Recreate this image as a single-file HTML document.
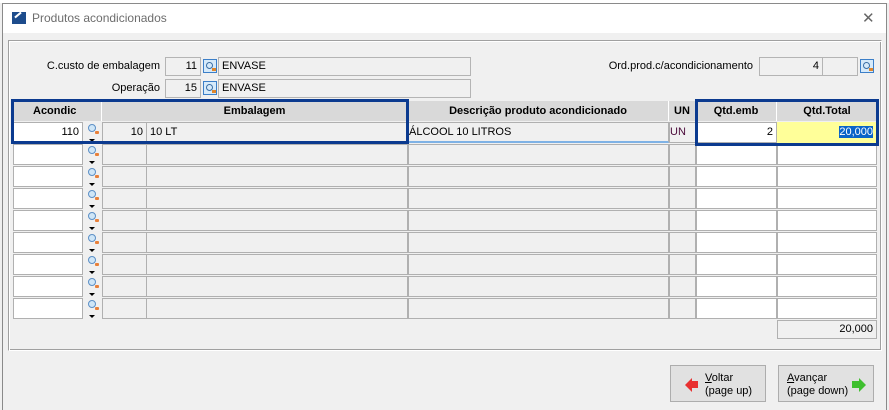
<!DOCTYPE html>
<html><head><meta charset="utf-8"><style>
*{margin:0;padding:0;box-sizing:border-box}
body{width:889px;height:410px;background:#f0f0f0;font-family:"Liberation Sans",sans-serif;font-size:11px;color:#000;position:relative;overflow:hidden}
.a{position:absolute}
.c{position:absolute;border:1px solid #b0b0b0;height:21px;line-height:19px;padding:0 3px;white-space:nowrap;overflow:hidden}
.w{background:#fff}.g{background:#f0f0f0}
.r{text-align:right}
.hd{position:absolute;top:101px;height:20px;background:#d9d9d9;font-weight:bold;text-align:center;line-height:20px;border-right:1px solid #fff}
.ic{position:absolute;width:8px;height:8px;border:1.5px solid #5b8fc6;border-radius:50%;background:#cfe6f7}
.ic:after{content:"";position:absolute;left:6px;top:6px;width:4px;height:3px;background:#e8803a;border-radius:1px}
.dn{position:absolute;width:0;height:0;border-left:3px solid transparent;border-right:3px solid transparent;border-top:3px solid #000}
.lk{position:absolute;width:14px;height:14px;border:1px solid #3c7fc8;background:#d6eafa}
.lk i{position:absolute;left:2px;top:2px;width:7px;height:7px;border:1.5px solid #3a6ea5;border-radius:50%}
.lk b{position:absolute;left:8px;top:8px;width:4px;height:3px;background:#e0862b}
.fld{position:absolute;border:1px solid #b4b4b4;background:#f0f0f0;height:19px;line-height:17px;padding:0 3px}
.box{position:absolute;border:3px solid #0b3a8f}
.btn{position:absolute;top:365px;height:37px;width:96px;border:1px solid #adadad;background:#e1e1e1;font-size:11px;line-height:13px}
</style></head><body>
<div class="a" style="left:0;top:0;width:889px;height:3px;background:#fff"></div>
<div class="a" style="left:2px;top:3px;width:885px;height:407px;border:1px solid #8a8a8a;border-bottom:none;background:#f0f0f0"></div>
<div class="a" style="left:3px;top:4px;width:883px;height:29px;background:#fff"></div>
<div class="a" style="left:12px;top:12px;width:14px;height:12px;background:#1d4c8c"></div>
<div class="a" style="left:14px;top:14px;width:8px;height:2px;background:#fff;transform:rotate(-40deg)"></div>
<div class="a" style="left:32px;top:11px;font-size:12px;color:#6d6d6d">Produtos acondicionados</div>
<div class="a" style="left:862px;top:9px;font-size:15px;color:#666">✕</div>
<div class="a" style="left:8px;top:40px;width:874px;height:311px;border:1px solid #a0a0a0;border-right-color:#fff;border-bottom-color:#fff;box-shadow:inset 1px 1px 0 #fff, inset -1px -1px 0 #a0a0a0"></div>

<div class="a" style="left:20px;top:60px;width:140px;text-align:right;font-size:11px">C.custo de embalagem</div>
<div class="fld r" style="left:165px;top:57px;width:36px">11</div>
<div class="lk" style="left:203px;top:59px"><i></i><b></b></div>
<div class="fld" style="left:218px;top:57px;width:253px">ENVASE</div>
<div class="a" style="left:20px;top:82px;width:140px;text-align:right">Operação</div>
<div class="fld r" style="left:165px;top:79px;width:36px">15</div>
<div class="lk" style="left:203px;top:81px"><i></i><b></b></div>
<div class="fld" style="left:218px;top:79px;width:253px">ENVASE</div>
<div class="a" style="left:560px;top:60px;width:193px;text-align:right">Ord.prod.c/acondicionamento</div>
<div class="fld r" style="left:759px;top:57px;width:64px">4</div>
<div class="fld" style="left:822px;top:57px;width:36px"></div>
<div class="lk" style="left:860px;top:59px"><i></i><b></b></div>

<div class="hd" style="left:13px;width:89px;text-align:left;padding-left:20px">Acondic</div>
<div class="hd" style="left:102px;width:306px">Embalagem</div>
<div class="hd" style="left:408px;width:261px">Descrição produto acondicionado</div>
<div class="hd" style="left:669px;width:27px">UN</div>
<div class="hd" style="left:696px;width:81px">Qtd.emb</div>
<div class="hd" style="left:777px;width:101px">Qtd.Total</div>

<div class="c w r" style="left:13px;top:122px;width:70px">110</div>
<div class="c g r" style="left:102px;top:122px;width:45px">10</div>
<div class="c g" style="left:146px;top:122px;width:262px">10 LT</div>
<div class="c g" style="left:408px;top:122px;width:261px;padding:0;border-bottom:2px solid #7fb2e5">ÁLCOOL 10 LITROS</div>
<div class="c g" style="left:669px;top:122px;width:27px;padding:0;color:#4a0a3a">UN</div>
<div class="c w r" style="left:696px;top:122px;width:81px">2</div>
<div class="c r" style="left:777px;top:122px;width:100px;background:#ffff99;border-color:#ffff99"><span style="background:#0a64c8;color:#fff">20,000</span></div>
<div class="ic" style="left:88px;top:124px"></div><div class="dn" style="left:89px;top:139px"></div>

<div id="rows"></div>
<div class="c g r" style="left:777px;top:320px;width:100px;height:19px;line-height:17px">20,000</div>

<div class="box" style="left:11px;top:99px;width:398px;height:45px"></div>
<div class="box" style="left:695px;top:99px;width:184px;height:47px"></div>

<div class="btn" style="left:670px">
<div class="a" style="left:14px;top:12px;width:0;height:0;border-top:7px solid transparent;border-bottom:7px solid transparent;border-right:7px solid #e83030"></div>
<div class="a" style="left:20px;top:15px;width:7px;height:7px;background:#e83030"></div>
<div class="a" style="left:34px;top:6px"><u>V</u>oltar<br>(page up)</div></div>
<div class="btn" style="left:778px">
<div class="a" style="left:8px;top:6px"><u>A</u>vançar<br>(page down)</div>
<div class="a" style="left:73px;top:15px;width:7px;height:7px;background:#3fbf2f"></div>
<div class="a" style="left:80px;top:12px;width:0;height:0;border-top:7px solid transparent;border-bottom:7px solid transparent;border-left:7px solid #3fbf2f"></div></div>

<script>
var h='';
for(var k=1;k<9;k++){var t=122+22*k;
h+='<div class="c w" style="left:13px;top:'+t+'px;width:70px"></div>'+
'<div class="c g" style="left:102px;top:'+t+'px;width:45px"></div>'+
'<div class="c g" style="left:146px;top:'+t+'px;width:262px"></div>'+
'<div class="c g" style="left:408px;top:'+t+'px;width:261px"></div>'+
'<div class="c g" style="left:669px;top:'+t+'px;width:27px"></div>'+
'<div class="c w" style="left:696px;top:'+t+'px;width:81px"></div>'+
'<div class="c w" style="left:777px;top:'+t+'px;width:100px"></div>'+
'<div class="ic" style="left:88px;top:'+(t+2)+'px"></div><div class="dn" style="left:89px;top:'+(t+17)+'px"></div>';}
document.getElementById('rows').innerHTML=h;
</script>
</body></html>
